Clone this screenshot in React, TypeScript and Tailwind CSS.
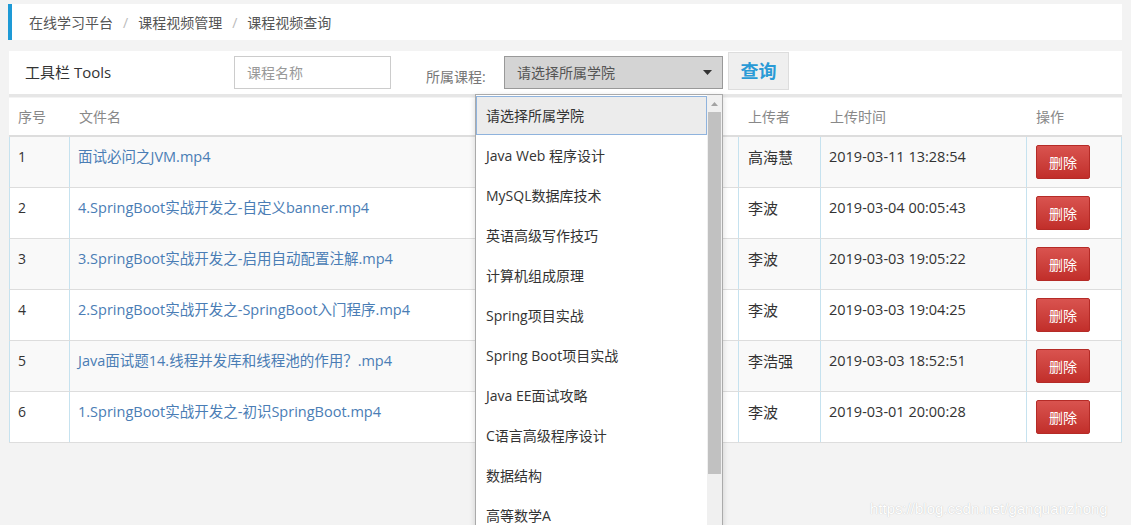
import React from "react";

const rows = [
  ["1", "面试必问之JVM.mp4", "高海慧", "2019-03-11 13:28:54"],
  ["2", "4.SpringBoot实战开发之-自定义banner.mp4", "李波", "2019-03-04 00:05:43"],
  ["3", "3.SpringBoot实战开发之-启用自动配置注解.mp4", "李波", "2019-03-03 19:05:22"],
  ["4", "2.SpringBoot实战开发之-SpringBoot入门程序.mp4", "李波", "2019-03-03 19:04:25"],
  ["5", "Java面试题14.线程并发库和线程池的作用？.mp4", "李浩强", "2019-03-03 18:52:51"],
  ["6", "1.SpringBoot实战开发之-初识SpringBoot.mp4", "李波", "2019-03-01 20:00:28"],
];

const options = [
  "请选择所属学院",
  "Java Web 程序设计",
  "MySQL数据库技术",
  "英语高级写作技巧",
  "计算机组成原理",
  "Spring项目实战",
  "Spring Boot项目实战",
  "Java EE面试攻略",
  "C语言高级程序设计",
  "数据结构",
  "高等数学A",
];

const font = { fontFamily: '"Open Sans", "Noto Sans CJK SC", sans-serif' };

export default function App() {
  return (
    <div
      className="relative h-[525px] w-[1131px] overflow-hidden bg-[#f3f3f3] pl-[8px] pt-[4px] text-[#333]"
      style={font}
    >
      {/* breadcrumb */}
      <div className="flex h-[36px] w-[1114px] items-center border-l-[4px] border-[#1e9ad6] bg-white pl-[17px] text-[14px] text-[#555]">
        <span>在线学习平台</span>
        <span className="mx-[10px] text-[#bbb]">/</span>
        <span>课程视频管理</span>
        <span className="mx-[10px] text-[#bbb]">/</span>
        <span>课程视频查询</span>
      </div>

      {/* toolbar */}
      <div className="ml-[1px] mt-[11px] w-[1113px] border-b-[3px] border-[#e6e6e6] bg-white">
        <div className="flex h-[43px] items-center">
          <div className="w-[225px] pl-[16px] text-[15px] text-[#333]">工具栏 Tools</div>
          <div className="flex h-[33px] w-[157px] items-center border border-[#ccc] pl-[12px] text-[14px] text-[#999]">
            课程名称
          </div>
          <div className="ml-[35px] mt-[8px] w-[78px] text-[14px] text-[#777]">所属课程:</div>
          <div className="relative">
            <div className="flex h-[33px] w-[219px] items-center justify-between border border-[#999] bg-[#d4d4d4] pl-[12px] pr-[10px] text-[14px] text-[#555]">
              <span>请选择所属学院</span>
              <svg width="9" height="5" viewBox="0 0 9 5">
                <path d="M0 0 L9 0 L4.5 5 Z" fill="#333" />
              </svg>
            </div>
            {/* dropdown */}
            <div className="absolute left-[-29px] top-[38px] z-10 flex h-[440px] w-[248px] border border-[#aaa] bg-white shadow-[0_2px_6px_rgba(0,0,0,0.15)]">
              <div className="flex w-[233px] flex-col pt-[1px]">
                {options.map((o, i) => (
                  <div
                    key={o}
                    className={
                      i === 0
                        ? "flex h-[39px] shrink-0 items-center border border-[#8fb3dd] bg-[#ececec] pl-[9px] text-[14px] text-[#333]"
                        : "flex h-[40px] shrink-0 items-center pl-[10px] text-[14px] text-[#333]"
                    }
                  >
                    {o}
                  </div>
                ))}
              </div>
              <div className="flex w-[15px] flex-col bg-[#f0f0f0]">
                <div className="flex h-[17px] items-center justify-center">
                  <svg width="7" height="4" viewBox="0 0 7 4">
                    <path d="M0 4 L7 4 L3.5 0 Z" fill="#a3a3a3" />
                  </svg>
                </div>
                <div className="mx-[1px] h-[362px] bg-[#c1c1c1]" />
              </div>
            </div>
          </div>
          <div className="ml-[5px] mt-[-3px] flex h-[38px] w-[61px] items-center justify-center border border-[#ddd] bg-[#efefef] text-[18px] font-semibold text-[#2a9ad6]">
            查询
          </div>
        </div>
      </div>

      {/* table */}
      <div className="ml-[1px] mt-[1px] w-[1113px]">
        <div className="grid h-[39px] grid-cols-[61px_669px_82px_206px_95px] items-center border-b-[2px] border-[#ddd] bg-white text-[14px] text-[#888]">
          <div className="pl-[9px]">序号</div>
          <div className="pl-[9px]">文件名</div>
          <div className="pl-[9px]">上传者</div>
          <div className="pl-[9px]">上传时间</div>
          <div className="pl-[9px]">操作</div>
        </div>
        {rows.map((r, i) => (
          <div
            key={r[0]}
            className={
              "grid h-[51px] grid-cols-[61px_669px_82px_206px_95px] border-b border-[#ddd] text-[14px] " +
              (i % 2 === 0 ? "bg-[#f9f9f9]" : "bg-white")
            }
          >
            <div className="border-x border-[#c6e2ef] pl-[8px] pt-[10px] leading-[20px] text-[#333]">{r[0]}</div>
            <div className="border-r border-[#c6e2ef] pl-[8px] pt-[10px] text-[14.5px] leading-[20px] text-[#4a7db5]">{r[1]}</div>
            <div className="border-r border-[#c6e2ef] pl-[9px] pt-[10px] text-[15px] leading-[20px] text-[#333]">{r[2]}</div>
            <div className="border-r border-[#c6e2ef] pl-[8px] pt-[10px] text-[14.5px] leading-[20px] text-[#333]">{r[3]}</div>
            <div className="border-r border-[#c6e2ef] pl-[9px] pt-[8px]">
              <div className="flex h-[34px] w-[54px] items-center justify-center rounded-[2px] border border-[#b52b27] bg-gradient-to-b from-[#d9534f] to-[#c12e2a] text-[14px] text-white">
                删除
              </div>
            </div>
          </div>
        ))}
      </div>

      <div
        className="absolute bottom-[5px] left-[870px] text-[15px] text-white [text-shadow:0_0_1px_#b5b5b5]"
        style={{ fontFamily: '"Liberation Sans", Arial, sans-serif' }}
      >
        https://blog.csdn.net/ganquanzhong
      </div>
    </div>
  );
}
